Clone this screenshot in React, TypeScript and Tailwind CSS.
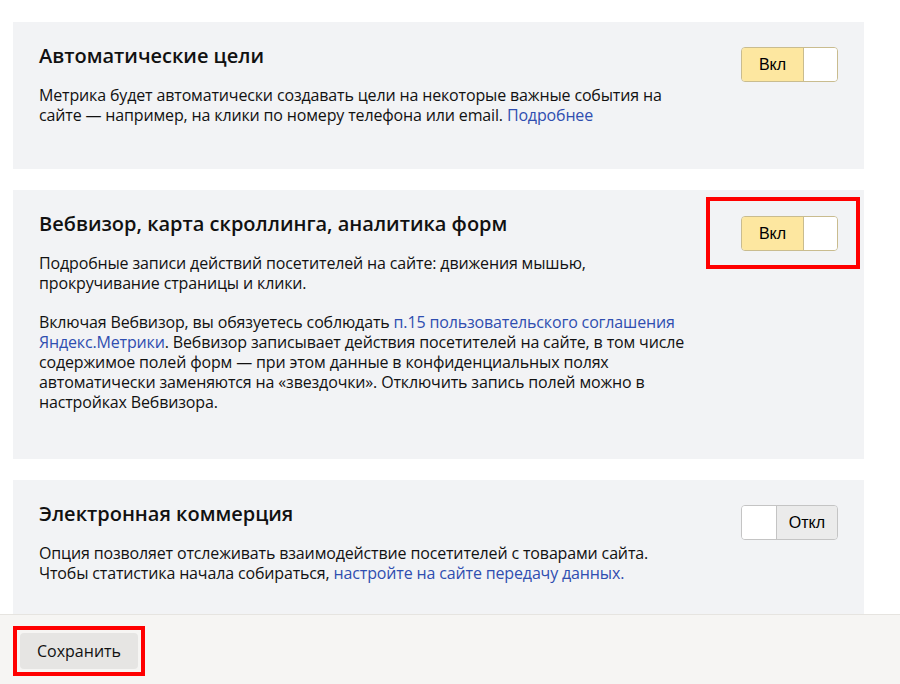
import React from "react";

const font = { fontFamily: '"Open Sans", "Noto Sans", sans-serif' };

function ToggleOn() {
  return (
    <div className="flex h-[35px] w-[97px] shrink-0 overflow-hidden rounded-[4px] border border-[#c9bc8f]">
      <div className="flex w-[61px] items-center justify-center bg-[#fde7a0] text-[16px] text-black" style={{ fontFamily: '"Liberation Sans", Arial, sans-serif' }}>
        Вкл
      </div>
      <div className="flex-1 border-l border-[#c9bc8f] bg-white" />
    </div>
  );
}

function ToggleOff() {
  return (
    <div className="flex h-[35px] w-[97px] shrink-0 overflow-hidden rounded-[4px] border border-[#c4c4c4]">
      <div className="w-[35px] border-r border-[#c4c4c4] bg-white" />
      <div className="flex flex-1 items-center justify-center bg-[#ebebeb] text-[16px] text-black" style={{ fontFamily: '"Liberation Sans", Arial, sans-serif' }}>
        Откл
      </div>
    </div>
  );
}

function Link({ children }: { children: React.ReactNode }) {
  return <span className="text-[#2f4eb0]">{children}</span>;
}

export default function App() {
  return (
    <div className="flex h-[684px] w-[900px] flex-col bg-white text-[#111]" style={font}>
      <div className="h-[614px] overflow-hidden pl-[13px] pr-[36px] pt-[22px]">
        <div className="flex flex-col gap-[21px]">
          <section className="flex h-[147px] justify-between bg-[#f2f3f5] pl-[26px] pr-[26px] pt-[19px]">
            <div className="w-[640px]">
              <h2 className="text-[20px] font-semibold leading-[30px]">Автоматические цели</h2>
              <p className="mt-[14px] text-[16px] leading-[20px] tracking-[-0.15px]">
                Метрика будет автоматически создавать цели на некоторые важные события на сайте — например, на клики по номеру телефона или email.{" "}
                <Link>Подробнее</Link>
              </p>
            </div>
            <div className="pt-[6px]">
              <ToggleOn />
            </div>
          </section>

          <section className="flex h-[269px] justify-between bg-[#f2f3f5] pl-[26px] pr-[26px] pt-[19px]">
            <div className="w-[660px]">
              <h2 className="text-[20px] font-semibold leading-[30px]">Вебвизор, карта скроллинга, аналитика форм</h2>
              <p className="mt-[14px] w-[590px] text-[16px] leading-[20px] tracking-[-0.15px]">
                Подробные записи действий посетителей на сайте: движения мышью, прокручивание страницы и клики.
              </p>
              <p className="mt-[19px] text-[16px] leading-[20px] tracking-[-0.15px]">
                Включая Вебвизор, вы обязуетесь соблюдать <Link>п.15 пользовательского соглашения Яндекс.Метрики</Link>. Вебвизор записывает действия посетителей на сайте, в том числе содержимое полей форм — при этом данные в конфиденциальных полях автоматически заменяются на «звездочки». Отключить запись полей можно в настройках Вебвизора.
              </p>
            </div>
            <div className="-mr-[22px] -mt-[12px] flex h-[72px] w-[154px] shrink-0 items-start justify-end border-4 border-[#ff0000] pr-[18px] pt-[15px]">
              <ToggleOn />
            </div>
          </section>

          <section className="flex h-[200px] justify-between bg-[#f2f3f5] pl-[26px] pr-[26px] pt-[19px]">
            <div className="w-[660px]">
              <h2 className="text-[20px] font-semibold leading-[30px]">Электронная коммерция</h2>
              <p className="mt-[14px] text-[16px] leading-[20px] tracking-[-0.15px]">
                Опция позволяет отслеживать взаимодействие посетителей с товарами сайта. Чтобы статистика начала собираться,{" "}
                <Link>настройте на сайте передачу данных.</Link>
              </p>
            </div>
            <div className="pt-[6px]">
              <ToggleOff />
            </div>
          </section>
        </div>
      </div>
      <footer className="flex h-[70px] items-start border-t border-[#e6e4e0] bg-[#f6f5f3] pl-[13px] pt-[11px]">
        <div className="border-4 border-[#ff0000] p-[3px]">
          <button className="h-[36px] rounded-[4px] bg-[#e6e5e3] px-[17px] text-[16px] text-[#111]">Сохранить</button>
        </div>
      </footer>
    </div>
  );
}
